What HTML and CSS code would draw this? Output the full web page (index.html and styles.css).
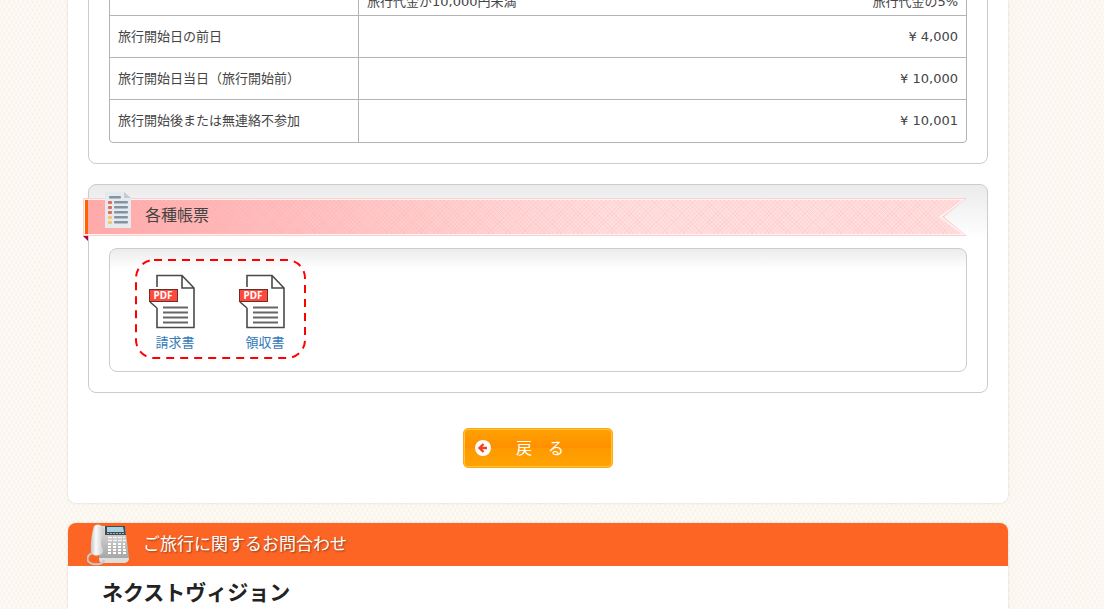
FILE: index.html
```html
<!DOCTYPE html>
<html lang="ja">
<head>
    <meta charset="UTF-8">
    <meta name="viewport" content="width=device-width, initial-scale=1.0">
    <title>ご予約内容</title>
    <link rel="stylesheet" href="styles.css">
</head>
<body>
    <main class="content">
        <section class="panel">
            <table class="cancel-table">
                <tbody>
                    <tr class="rate-row">
                        <th scope="row"></th>
                        <td>
                            <div class="rate"><span>旅行代金が10,000円未満</span><span>旅行代金の5%</span></div>
                        </td>
                    </tr>
                    <tr>
                        <th scope="row">旅行開始日の前日</th>
                        <td>¥ 4,000</td>
                    </tr>
                    <tr>
                        <th scope="row">旅行開始日当日（旅行開始前）</th>
                        <td>¥ 10,000</td>
                    </tr>
                    <tr>
                        <th scope="row">旅行開始後または無連絡不参加</th>
                        <td>¥ 10,001</td>
                    </tr>
                </tbody>
            </table>
        </section>

        <section class="panel panel-forms">
            <div class="ribbon">
                <div class="ribbon-band"></div>
                <svg class="ribbon-icon" width="26" height="36" viewBox="0 0 26 36" aria-hidden="true">
                    <path d="M0 0h19l7 6v30H0z" fill="#e6e9ed"/>
                    <path d="M19 0l7 6h-7z" fill="#c5cad1"/>
                    <g fill="#8493a3">
                        <rect x="4" y="4" width="12" height="2.500" rx="1"/>
                        <rect x="9" y="9" width="14" height="2.500" rx="1"/>
                        <rect x="9" y="14" width="14" height="2.500" rx="1"/>
                        <rect x="9" y="19" width="14" height="2.500" rx="1"/>
                        <rect x="9" y="24" width="14" height="2.500" rx="1"/>
                        <rect x="9" y="29" width="14" height="2.500" rx="1"/>
                    </g>
                    <g fill="#dc6b53">
                        <rect x="3" y="9" width="4" height="3" rx="1"/>
                        <rect x="3" y="14" width="4" height="3" rx="1"/>
                        <rect x="3" y="19" width="4" height="3" rx="1"/>
                    </g>
                    <g fill="#f6c56c">
                        <rect x="3" y="24" width="4" height="3" rx="1"/>
                        <rect x="3" y="29" width="4" height="3" rx="1"/>
                    </g>
                </svg>
                <h2 class="ribbon-title">各種帳票</h2>
            </div>
            <div class="form-box">
                <div class="form-list">
                    <svg class="form-frame" aria-hidden="true">
                        <rect x="1" y="1" width="169" height="98" rx="18" fill="none" stroke="#ff0000" stroke-width="2" stroke-dasharray="8 6"/>
                    </svg>
                    <a class="form-link" href="#">
                        <svg width="60" height="60" viewBox="0 0 60 60" aria-hidden="true">
                            <path d="M12 16V4.500h25L49 17v39.500H12V37M37 4.500V17h12M5 31l7 6" fill="none" stroke="#4a4a4a" stroke-width="1.600"/>
                            <rect x="4.500" y="18.500" width="28" height="12" fill="#fd4a3c" stroke="#6b2f2a"/>
                            <text x="18" y="28" class="pdf-mark">PDF</text>
                            <path d="M18 36.500h25M18 41.500h25M18 46.500h25M18 51.500h25" stroke="#666" stroke-width="2"/>
                        </svg>
                        <span>請求書</span>
                    </a>
                    <a class="form-link" href="#">
                        <svg width="60" height="60" viewBox="0 0 60 60" aria-hidden="true">
                            <path d="M12 16V4.500h25L49 17v39.500H12V37M37 4.500V17h12M5 31l7 6" fill="none" stroke="#4a4a4a" stroke-width="1.600"/>
                            <rect x="4.500" y="18.500" width="28" height="12" fill="#fd4a3c" stroke="#6b2f2a"/>
                            <text x="18" y="28" class="pdf-mark">PDF</text>
                            <path d="M18 36.500h25M18 41.500h25M18 46.500h25M18 51.500h25" stroke="#666" stroke-width="2"/>
                        </svg>
                        <span>領収書</span>
                    </a>
                </div>
            </div>
        </section>

        <button type="button" class="back-button">
            <svg width="16" height="16" viewBox="0 0 16 16" aria-hidden="true">
                <circle cx="8" cy="8" r="8" fill="#fff"/>
                <path d="M8.500 4L4.500 8l4 4M5 8h7" fill="none" stroke="#f8401c" stroke-width="2.400"/>
            </svg>
            <span>戻　る</span>
        </button>
    </main>

    <section class="contact">
        <header class="contact-header">
            <svg width="42" height="42" viewBox="0 0 42 42" aria-hidden="true">
                <defs>
                    <linearGradient id="base" x1="0" y1="0" x2="0" y2="1">
                        <stop offset="0" stop-color="#dcdcdc"/>
                        <stop offset="1" stop-color="#a0a0a0"/>
                    </linearGradient>
                    <linearGradient id="handset" x1="0" y1="0" x2="1" y2="0">
                        <stop offset="0" stop-color="#c4c4c4"/>
                        <stop offset=".4" stop-color="#fafafa"/>
                        <stop offset="1" stop-color="#c9c9c9"/>
                    </linearGradient>
                </defs>
                <path d="M13 2h25l4 32q0 4-4 4H15q-3 0-3-4z" fill="url(#base)"/>
                <path d="M12 34h30q0 4-4 5H15q-3 0-3-5z" fill="#dedede"/>
                <path d="M18 2h20l1 9H18z" fill="#444c52"/>
                <path d="M20 3h16l1 5H20z" fill="#a8d2df"/>
                <path d="M20 9.500h18" stroke="#aab0b4" stroke-dasharray="2 1"/>
                <path d="M21 13.500h17M21 16.500h18" stroke="#f4f4f4" stroke-width="1.500" stroke-dasharray="4 1"/>
                <path d="M21 20h17M21 23h17M21 26h18M21 29h18" stroke="#fff" stroke-width="2" stroke-dasharray="3 2"/>
                <path d="M5 29q-6 3-4 8 3 4 11 3 5-1 5-4" fill="none" stroke="#c9c9c9" stroke-width="2"/>
                <path d="M7 2q4-3 8 0 3 3 1 9-2 4-2 8 0 3 2 6 1 5-4 6-6 2-8-3-1-12 3-26z" fill="url(#handset)"/>
            </svg>
            <h2>ご旅行に関するお問合わせ</h2>
        </header>
        <h3 class="contact-name">ネクストヴィジョン</h3>
    </section>
</body>
</html>
```
FILE: styles.css
```css
* {
    margin: 0;
    padding: 0;
    box-sizing: border-box;
}

body {
    display: flex;
    flex-direction: column;
    align-items: center;
    min-height: 100vh;
    padding-right: 28px;
    font-family: "DejaVu Sans", "Noto Sans CJK JP", sans-serif;
    font-size: 13px;
    line-height: 18px;
    color: #444;
    background-color: #fdfaf6;
    background-image:
        repeating-linear-gradient(60deg, transparent 0 3px, rgba(236, 222, 200, 0.2) 3px 4px),
        repeating-linear-gradient(-60deg, transparent 0 3px, rgba(236, 222, 200, 0.2) 3px 4px);
}

/* 上部はスクロールされた位置から表示 */
.content {
    width: 100%;
    max-width: 940px;
    margin-top: -68px;
    padding: 20px 20px 35px;
    background: #fff;
    border-radius: 0 0 8px 8px;
    box-shadow: 0 0 3px rgba(120, 90, 50, 0.2);
}

.panel {
    margin-bottom: 20px;
    padding: 20px;
    border: 1px solid #ccc;
    border-radius: 8px;
}

/* キャンセル料 */
.cancel-table {
    width: 100%;
    border: 1px solid #b4b4b4;
    border-radius: 4px;
    border-spacing: 0;
}

.cancel-table th,
.cancel-table td {
    height: 42px;
    padding: 0 8px;
    border-bottom: 1px solid #b4b4b4;
    font-weight: normal;
}

.cancel-table th {
    width: 249px;
    border-right: 1px solid #b4b4b4;
    text-align: left;
}

.cancel-table td {
    text-align: right;
}

.cancel-table tr:last-child > * {
    border-bottom: none;
}

.cancel-table .rate-row td {
    padding-bottom: 4px;
    vertical-align: bottom;
}

.rate {
    display: flex;
    justify-content: space-between;
}

/* 各種帳票 */
.panel-forms {
    margin-bottom: 35px;
    padding-top: 13px;
    background: linear-gradient(#ebebeb, #fff 54px);
}

.ribbon {
    position: relative;
    height: 38px;
    margin: 0 0 12px -26px;
    padding-left: 62px;
}

.ribbon::after {
    content: "";
    position: absolute;
    left: 0;
    top: 100%;
    width: 5px;
    height: 5px;
    background: #b00040;
    clip-path: polygon(0 0, 100% 0, 100% 100%);
}

.ribbon-band,
.ribbon-band::before,
.ribbon-band::after {
    position: absolute;
    inset: 0;
    clip-path: polygon(0 0, 100% 0, calc(100% - 23px) 50%, 100% 100%, 0 100%);
}

.ribbon-band {
    background: #fccfcf;
}

.ribbon-band::before {
    content: "";
    inset: 1px 2px 1px 1px;
    background: #fff4f4;
}

.ribbon-band::after {
    content: "";
    inset: 2px 5px 2px 2px;
    border-left: 3px solid #ff6000;
    background:
        repeating-linear-gradient(45deg, transparent 0 2px, rgba(255, 150, 150, 0.12) 2px 3px),
        repeating-linear-gradient(-45deg, transparent 0 2px, rgba(255, 150, 150, 0.12) 2px 3px),
        linear-gradient(90deg, #ffabab, #ffe0e0 60%, #ffdede);
}

.ribbon-icon {
    position: absolute;
    left: 22px;
    top: -6px;
}

.ribbon-title {
    position: relative;
    font-size: 16px;
    font-weight: normal;
    line-height: 36px;
}

.form-box {
    min-height: 124px;
    padding: 10px 25px;
    border: 1px solid #ccc;
    border-radius: 8px;
    background: linear-gradient(#ececec, #fff 20px);
}

.form-list {
    position: relative;
    display: inline-flex;
    gap: 30px;
    height: 100px;
    padding: 12px 10px 0;
}

.form-frame {
    position: absolute;
    left: 0;
    top: 0;
    width: 171px;
    height: 100px;
    pointer-events: none;
}

.form-link {
    display: flex;
    flex-direction: column;
    align-items: center;
    gap: 3px;
    color: #337ab7;
    text-decoration: none;
}

.form-link:hover {
    text-decoration: underline;
}

.pdf-mark {
    fill: #fff;
    font-family: "Noto Sans", sans-serif;
    font-size: 10px;
    font-weight: bold;
    text-anchor: middle;
}

.back-button {
    display: flex;
    align-items: center;
    gap: 25px;
    width: 150px;
    height: 40px;
    margin: 0 auto;
    padding: 0 11px;
    border: 1px solid #ffa81c;
    border-radius: 5px;
    background: linear-gradient(#ffa200, #ff8f00 50%, #ff9a00 51%, #ffa200);
    box-shadow: inset 0 0 0 1px #ffc632;
    color: #fff;
    font-family: inherit;
    font-size: 16px;
    cursor: pointer;
}

.back-button span {
    padding-bottom: 3px;
}

/* お問合わせ */
.contact {
    flex: 1;
    width: 100%;
    max-width: 940px;
    margin-top: 20px;
    background: #fff;
    border-radius: 8px 8px 0 0;
    box-shadow: 0 0 3px rgba(120, 90, 50, 0.2);
}

.contact-header {
    display: flex;
    align-items: center;
    gap: 14px;
    height: 43px;
    padding-left: 19px;
    border-radius: 8px 8px 0 0;
    background: #fc6524;
    color: #fff;
}

.contact-header h2 {
    padding-bottom: 2px;
    font-size: 17px;
    font-weight: normal;
    text-shadow: 1px 1px 2px rgba(0, 0, 0, 0.4);
}

.contact-name {
    padding: 12px 34px 0;
    color: #222;
    font-size: 21px;
    line-height: 30px;
}
```
